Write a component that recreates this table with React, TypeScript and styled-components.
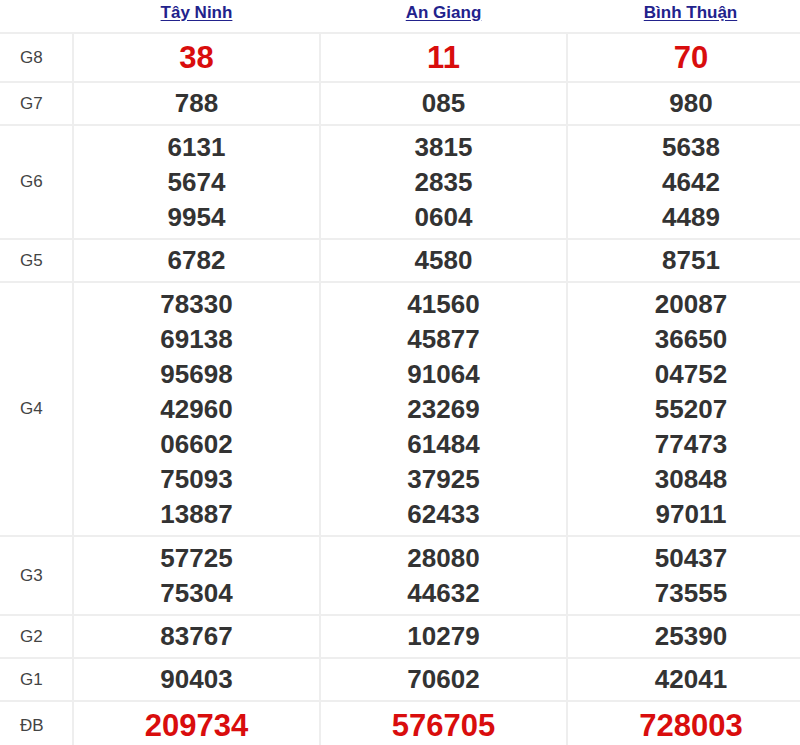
import React from "react";
import styled, { createGlobalStyle } from "styled-components";

const Global = createGlobalStyle`
  html, body { margin: 0; padding: 0; background: #fff; overflow: hidden; }
  body { font-family: "Liberation Sans", Arial, sans-serif; }
`;

const Table = styled.table`
  width: 814px;
  border-collapse: collapse;
  table-layout: fixed;
  font-family: "Liberation Sans", Arial, sans-serif;
`;

const HeadRow = styled.tr`
  border-bottom: 2px solid #eeeeee;
`;

const HeadCell = styled.th`
  padding: 0 0 7px;
  height: 25px;
  line-height: 25px;
  text-align: center;
  vertical-align: top;
  font-size: 17px;
  font-weight: bold;
`;

const ProvinceLink = styled.a`
  color: #22228c;
  text-decoration: underline;
  text-underline-offset: 2px;
`;

const Row = styled.tr`
  border-bottom: 2px solid #eeeeee;
`;

const LabelCell = styled.td`
  width: 53px;
  padding: 0 0 0 20px;
  font-size: 17px;
  color: #444;
  vertical-align: middle;
  border-right: 2px solid #eeeeee;
`;

const NumCell = styled.td<{ $big?: boolean; $multi?: boolean }>`
  padding: ${(p) => (p.$multi ? "4px 0 3px" : "3px 0")};
  text-align: center;
  vertical-align: middle;
  border-right: 2px solid #eeeeee;
  font-weight: bold;
  font-size: ${(p) => (p.$big ? "31px" : "26px")};
  line-height: ${(p) => (p.$big ? "41px" : "35px")};
  color: ${(p) => (p.$big ? "#d90d0d" : "#333333")};
  &:last-child { border-right: none; }
`;

const Num = styled.div`
  display: block;
`;

const provinces = ["Tây Ninh", "An Giang", "Bình Thuận"];

const rows: { label: string; big?: boolean; data: string[][] }[] = [
  { label: "G8", big: true, data: [["38"], ["11"], ["70"]] },
  { label: "G7", data: [["788"], ["085"], ["980"]] },
  {
    label: "G6",
    data: [
      ["6131", "5674", "9954"],
      ["3815", "2835", "0604"],
      ["5638", "4642", "4489"],
    ],
  },
  { label: "G5", data: [["6782"], ["4580"], ["8751"]] },
  {
    label: "G4",
    data: [
      ["78330", "69138", "95698", "42960", "06602", "75093", "13887"],
      ["41560", "45877", "91064", "23269", "61484", "37925", "62433"],
      ["20087", "36650", "04752", "55207", "77473", "30848", "97011"],
    ],
  },
  {
    label: "G3",
    data: [
      ["57725", "75304"],
      ["28080", "44632"],
      ["50437", "73555"],
    ],
  },
  { label: "G2", data: [["83767"], ["10279"], ["25390"]] },
  { label: "G1", data: [["90403"], ["70602"], ["42041"]] },
  { label: "ĐB", big: true, data: [["209734"], ["576705"], ["728003"]] },
];

export default function App() {
  return (
    <>
      <Global />
      <Table>
        <colgroup>
          <col style={{ width: 73 }} />
          <col style={{ width: 247 }} />
          <col style={{ width: 247 }} />
          <col style={{ width: 247 }} />
        </colgroup>
        <thead>
          <HeadRow>
            <HeadCell />
            {provinces.map((p) => (
              <HeadCell key={p}>
                <ProvinceLink href="#">{p}</ProvinceLink>
              </HeadCell>
            ))}
          </HeadRow>
        </thead>
        <tbody>
          {rows.map((r) => (
            <Row key={r.label}>
              <LabelCell>{r.label}</LabelCell>
              {r.data.map((nums, i) => (
                <NumCell key={i} $big={r.big} $multi={nums.length > 1}>
                  {nums.map((n, j) => (
                    <Num key={j}>{n}</Num>
                  ))}
                </NumCell>
              ))}
            </Row>
          ))}
        </tbody>
      </Table>
    </>
  );
}
